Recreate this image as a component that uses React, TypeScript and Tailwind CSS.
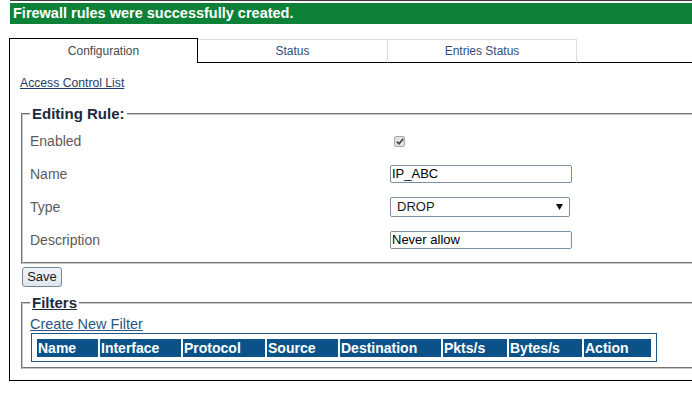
import React from "react";

const cols = [
  { label: "Name", w: "w-[61px]" },
  { label: "Interface", w: "w-[81px]" },
  { label: "Protocol", w: "w-[82px]" },
  { label: "Source", w: "w-[71px]" },
  { label: "Destination", w: "w-[101px]" },
  { label: "Pkts/s", w: "w-[64px]" },
  { label: "Bytes/s", w: "w-[73px]" },
  { label: "Action", w: "w-[67px]" },
];

const Row = ({ label, children }: { label: string; children: React.ReactNode }) => (
  <div className="flex h-[33px] items-center">
    <div className="w-[360px] text-[14px] leading-[16px] text-[#5a5a5a]">{label}</div>
    <div className="flex items-center">{children}</div>
  </div>
);

export default function App() {
  return (
    <div className="w-[692px] h-[410px] overflow-hidden bg-white font-['Liberation_Sans',Arial,sans-serif]">
      <div className="w-[740px] pl-[9px]">
        {/* banner */}
        <div className="ml-px h-px bg-[#3a3a3a]" />
        <div className="ml-px mt-[2px] h-[21px] bg-[#0d8137] pl-[3px] text-[14.5px] font-bold leading-[21px] text-white">
          Firewall rules were successfully created.
        </div>

        {/* tabs */}
        <div className="mt-[14px] flex h-[25px] items-end">
          <div className="flex h-[25px] w-[189px] items-center justify-center border-x border-t border-black text-[12px] text-[#4a4a4a]">
            Configuration
          </div>
          <div className="flex h-[24px] w-[190px] items-center justify-center border-r border-t border-b border-r-[#dcdcdc] border-t-[#dcdcdc] border-b-black text-[12px] text-[#2f4d74]">
            Status
          </div>
          <div className="flex h-[24px] w-[189px] items-center justify-center border-r border-t border-b border-r-[#dcdcdc] border-t-[#dcdcdc] border-b-black text-[12px] text-[#2f4d74]">
            Entries Status
          </div>
          <div className="h-px flex-1 bg-black" />
        </div>

        {/* panel */}
        <div className="border-x border-b border-black pl-[10px] pr-[10px] pt-[13px] pb-[11px]">
          <a href="#" className="block w-fit text-[12.2px] leading-[14px] text-[#1f3b63] underline">
            Access Control List
          </a>

          <fieldset className="mt-[15px] ml-px border-2 [border-style:groove] border-[#c8c8c8] pl-[7px] pb-[6px]">
            <legend className="px-[2px] text-[15px] font-bold leading-[18px] text-[#1c2a40]">Editing Rule:</legend>
            <div className="pt-px">
              <Row label="Enabled">
                <span className="ml-[4px] mt-[2px] flex h-[11px] w-[11px] items-center justify-center rounded-[2px] border border-[#a8a8a8] bg-[#e4e4e4]">
                  <svg width="8" height="7" viewBox="0 0 8 7">
                    <path d="M0.8 3.6 L3 5.8 L7.2 0.9" fill="none" stroke="#4a4a4a" strokeWidth="1.7" />
                  </svg>
                </span>
              </Row>
              <Row label="Name">
                <div className="flex h-[18px] w-[182px] items-center rounded-[2px] border border-[#7d8fa2] pl-px text-[13px] text-black">
                  IP_ABC
                </div>
              </Row>
              <Row label="Type">
                <div className="mt-[1px] flex h-[20px] w-[180px] items-center justify-between rounded-[2px] border border-[#7d8fa2] pl-[6px] pr-[6px] text-[13px] text-[#1a1a1a]">
                  <span>DROP</span>
                  <svg width="7" height="6" viewBox="0 0 7 6">
                    <path d="M0 0 L7 0 L3.5 6 Z" fill="#111" />
                  </svg>
                </div>
              </Row>
              <Row label="Description">
                <div className="flex h-[18px] w-[182px] items-center rounded-[2px] border border-[#7d8fa2] pl-px text-[13px] text-black">
                  Never allow
                </div>
              </Row>
            </div>
          </fieldset>

          <button className="ml-[2px] mt-[3px] flex h-[20px] w-[40px] items-center justify-center rounded-[3px] border border-[#6f869c] bg-gradient-to-b from-[#f2f5f8] to-[#dfe7ef] text-[13px] text-[#1a1a1a]">
            Save
          </button>

          <fieldset className="mt-[7px] ml-px border-2 [border-style:groove] border-[#c8c8c8] pl-[7px] pb-[5px]">
            <legend className="px-[2px] text-[15px] font-bold leading-[18px] text-[#1c2a40] underline">Filters</legend>
            <a href="#" className="mt-[4px] block w-fit text-[14.5px] leading-[16px] text-[#2b5683] underline">
              Create New Filter
            </a>
            <div className="ml-px mt-px w-fit border border-[#1f5b8a] px-[5px] pt-[5px] pb-[4px]">
              <div className="flex gap-[2px]">
                {cols.map((c) => (
                  <div
                    key={c.label}
                    className={`${c.w} h-[18px] bg-[#0b5289] pl-px text-[14px] font-bold leading-[18px] text-white`}
                  >
                    {c.label}
                  </div>
                ))}
              </div>
            </div>
          </fieldset>
        </div>
      </div>
    </div>
  );
}
